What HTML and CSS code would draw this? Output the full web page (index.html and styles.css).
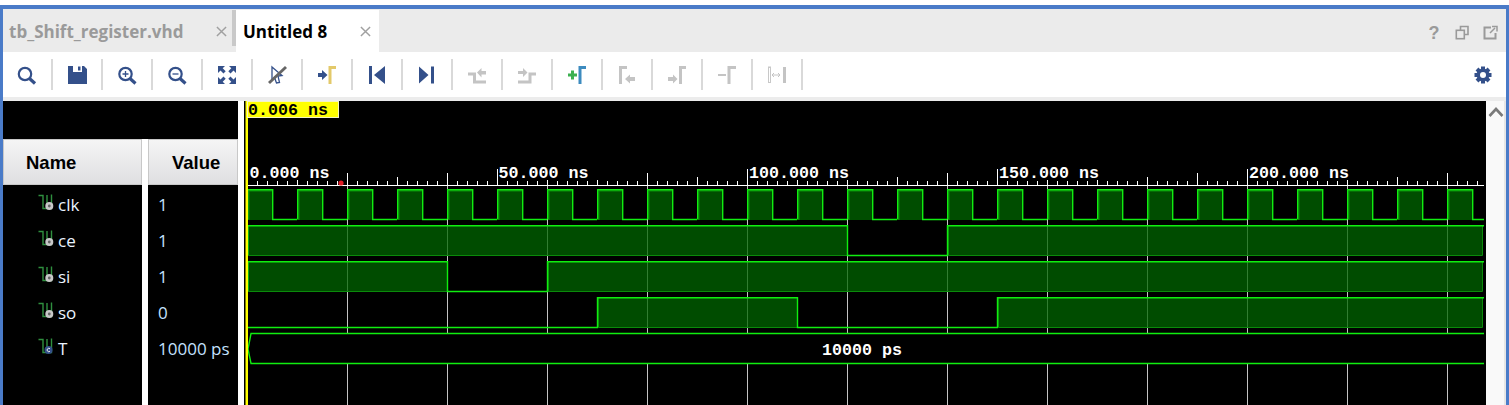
FILE: index.html
```html
<!DOCTYPE html>
<html lang="en">
<head>
    <meta charset="UTF-8">
    <meta name="viewport" content="width=device-width, initial-scale=1.0">
    <title>Untitled 8</title>
    <link rel="stylesheet" href="styles.css">
</head>
<body>
    <!-- shared icons -->
    <svg class="defs" width="0" height="0" aria-hidden="true">
        <symbol id="close" viewBox="0 0 12 12">
            <path d="M1 1l10 10M11 1L1 11" fill="none" stroke="#a0a0a0" stroke-width="1.6"/>
        </symbol>
        <symbol id="wire" viewBox="0 0 16 16">
            <path d="M0.5 1.5h4.5v13h8.5v-14M9 1v13" fill="none" stroke="#2f8f3f" stroke-width="1.4"/>
            <circle cx="11.3" cy="12" r="4" fill="#c8c8c8"/>
            <circle cx="11.3" cy="12" r="1.4" fill="#666"/>
        </symbol>
        <symbol id="wire-const" viewBox="0 0 16 16">
            <path d="M0.5 1.5h4.5v13h8.5v-14M9 1v13" fill="none" stroke="#2f8f3f" stroke-width="1.4"/>
            <circle cx="10.5" cy="12" r="4" fill="#34508a"/>
            <path d="M12 10.8a1.7 1.7 0 1 0 0 2.4" fill="none" stroke="#e8e8e8" stroke-width="1"/>
        </symbol>
    </svg>

    <div class="window">
        <div class="tabbar">
            <div class="tab">
                <span class="tab-title">tb_Shift_register.vhd</span>
                <svg class="tab-close"><use href="#close"/></svg>
            </div>
            <div class="tab-sep"></div>
            <div class="tab active">
                <span class="tab-title">Untitled 8</span>
                <svg class="tab-close"><use href="#close"/></svg>
            </div>
            <div class="tab-actions">
                <span class="help">?</span>
                <svg class="tab-icon" viewBox="0 0 16 16">
                    <path d="M6.5 5V1.5h7.5v8h-3.5" fill="none" stroke="#9a9a9a" stroke-width="1.6"/>
                    <rect x="2.3" y="5.3" width="8" height="8.4" fill="none" stroke="#9a9a9a" stroke-width="1.6"/>
                </svg>
                <svg class="tab-icon" viewBox="0 0 16 16">
                    <path d="M9 2.5H2.5v11h11V8" fill="none" stroke="#9a9a9a" stroke-width="2"/>
                    <path d="M8 8l5-5M10 1.5h5v5" fill="none" stroke="#9a9a9a" stroke-width="1.5"/>
                </svg>
            </div>
        </div>

        <div class="toolbar">
            <button class="tool" title="Search">
                <svg viewBox="0 0 24 24"><circle cx="10" cy="11" r="6.2" class="line"/><path d="M14.5 15.5l5.5 5" class="line thick"/></svg>
            </button>
            <button class="tool" title="Save">
                <svg viewBox="0 0 24 24"><path d="M3 3h5v6h9V3h2l3 3v15H3z" class="solid"/><path d="M13 3.5h2.5v4H13z" class="solid"/></svg>
            </button>
            <button class="tool" title="Zoom in">
                <svg viewBox="0 0 24 24"><circle cx="10.5" cy="11" r="6.2" class="line"/><path d="M15 15.5l5.5 5" class="line thick"/><path d="M7.5 11h6M10.5 8v6" class="line thin"/></svg>
            </button>
            <button class="tool" title="Zoom out">
                <svg viewBox="0 0 24 24"><circle cx="10.5" cy="11" r="6.2" class="line"/><path d="M15 15.5l5.5 5" class="line thick"/><path d="M7.5 11h6" class="line thin"/></svg>
            </button>
            <button class="tool" title="Zoom fit">
                <svg viewBox="0 0 24 24">
                    <path d="M3 3h7L7.7 5.3l3 3-2.2 2.2-3-3L3 10z" class="solid"/>
                    <path d="M21 3h-7l2.3 2.3-3 3 2.2 2.2 3-3L21 10z" class="solid"/>
                    <path d="M3 21h7l-2.3-2.3 3-3-2.2-2.2-3 3L3 14z" class="solid"/>
                    <path d="M21 21h-7l2.3-2.3-3-3 2.2-2.2 3 3L21 14z" class="solid"/>
                </svg>
            </button>
            <button class="tool" title="Snap to transition">
                <svg viewBox="0 0 24 24"><path d="M7 4l10 8.5-4 .5 1.5 6.5-3 .5-2-5.500-2.500 2.500z" class="line thin"/><path d="M4 20L21 4" fill="none" stroke="#666" stroke-width="3"/></svg>
            </button>
            <button class="tool" title="Go to cursor">
                <svg viewBox="0 0 24 24"><path d="M3 10h4V7l5.500 5-5.500 5v-3H3z" class="solid"/><path d="M15 21V4.500h6" fill="none" stroke="#e3c96a" stroke-width="3"/></svg>
            </button>
            <button class="tool" title="Go to time 0">
                <svg viewBox="0 0 24 24"><path d="M4 3h3v18H4zM20 3v18L9 12z" class="solid"/></svg>
            </button>
            <button class="tool" title="Go to last time">
                <svg viewBox="0 0 24 24"><path d="M4 3.500v17L13.500 12zM16 3.500h3v17h-3z" class="solid"/></svg>
            </button>
            <button class="tool" title="Previous transition">
                <svg viewBox="0 0 24 24"><path d="M3 11h6.500v8H21" class="muted-line"/><path d="M12 9.500L16.500 5v3H21v3.500h-4.500v3z" class="muted"/></svg>
            </button>
            <button class="tool" title="Next transition">
                <svg viewBox="0 0 24 24"><path d="M3 19h12v-8h6" class="muted-line"/><path d="M3 8h5V5l4.500 4.500L8 14v-3H3z" class="muted"/></svg>
            </button>
            <button class="tool" title="Add marker">
                <svg viewBox="0 0 24 24"><path d="M3 12h9M7.500 7.500v9" fill="none" stroke="#3cb050" stroke-width="3"/><path d="M15 21V4.500h6" fill="none" stroke="#3d8bbf" stroke-width="3"/></svg>
            </button>
            <button class="tool" title="Previous marker">
                <svg viewBox="0 0 24 24"><path d="M5.500 21V4.500H12" class="muted-line"/><path d="M10 16l5-4.500V14h5v4h-5v2.500z" class="muted"/></svg>
            </button>
            <button class="tool" title="Next marker">
                <svg viewBox="0 0 24 24"><path d="M3 14h5v-2.500l4.500 4.500L8 20.500V18H3z" class="muted"/><path d="M15.500 21V4.500H21" class="muted-line"/></svg>
            </button>
            <button class="tool" title="Remove marker">
                <svg viewBox="0 0 24 24"><path d="M3 12h8" class="muted-line thin"/><path d="M14 21V4.500h7" class="muted-line"/></svg>
            </button>
            <button class="tool" title="Swap cursors">
                <svg viewBox="0 0 24 24"><rect x="3.500" y="4" width="2" height="15.500" fill="none" stroke="#c8c8c8"/><path d="M7 12h8M9 10l-2 2 2 2M13 10l2 2-2 2" fill="none" stroke="#c4c4c4"/><path d="M18 4h3v16h-3z" class="muted"/></svg>
            </button>
            <button class="gear" title="Settings">
                <svg viewBox="0 0 24 24">
                    <path d="M12 3.500v17M3.500 12h17M6 6l12 12M18 6L6 18" fill="none" stroke="#34508a" stroke-width="4"/>
                    <circle cx="12" cy="12" r="6.500" fill="#34508a"/>
                    <circle cx="12" cy="12" r="3" fill="#fff"/>
                </svg>
            </button>
        </div>
        <div class="toolbar-edge"></div>

        <div class="wave-pane">
            <div class="signal-pane">
                <div class="pane-top"></div>
                <div class="signal-cols">
                    <div class="col col-name">
                        <div class="col-head">Name</div>
                        <div class="row"><svg class="wire"><use href="#wire"/></svg>clk</div>
                        <div class="row"><svg class="wire"><use href="#wire"/></svg>ce</div>
                        <div class="row"><svg class="wire"><use href="#wire"/></svg>si</div>
                        <div class="row"><svg class="wire"><use href="#wire"/></svg>so</div>
                        <div class="row"><svg class="wire"><use href="#wire-const"/></svg>T</div>
                    </div>
                    <div class="col col-value">
                        <div class="col-head">Value</div>
                        <div class="row">1</div>
                        <div class="row">1</div>
                        <div class="row">1</div>
                        <div class="row">0</div>
                        <div class="row">10000 ps</div>
                    </div>
                </div>
            </div>

            <svg class="waves" viewBox="244 101 1242 304">
                <defs>
                    <pattern id="minor" patternUnits="userSpaceOnUse" x="247" y="181" width="10" height="4">
                        <rect width="1" height="4" fill="#fff"/>
                    </pattern>
                    <pattern id="grid" patternUnits="userSpaceOnUse" x="347" y="186" width="100" height="10">
                        <rect width="1" height="10" fill="#c4c4c4"/>
                    </pattern>
                    <pattern id="clk" patternUnits="userSpaceOnUse" x="247" y="189" width="50" height="32">
                        <rect x="1" y="1" width="25" height="30" class="fill"/>
                        <path d="M2 31V2h23.500V31" class="dim"/>
                        <path d="M0.700 30.500V0.700h25v29.800h24.500" class="edge"/>
                    </pattern>
                </defs>

                <rect x="347" y="186" width="1101" height="219" fill="url(#grid)"/>

                <!-- ruler -->
                <rect x="247" y="185" width="1237" height="1" fill="#fff"/>
                <rect x="247" y="181" width="1231" height="4" fill="url(#minor)"/>
                <path class="major" d="M247.500 169V185M297.500 180V185M347.500 173V185M397.500 177V185M447.500 173V185M497.500 169V185M547.500 180V185M597.500 180V185M647.500 173V185M697.500 177V185M747.500 169V185M797.500 180V185M847.500 180V185M897.500 177V185M947.500 173V185M997.500 169V185M1047.500 180V185M1097.500 180V185M1147.500 177V185M1197.500 173V185M1247.500 169V185M1297.500 180V185M1347.500 180V185M1397.500 177V185M1447.500 173V185"/>
                <text class="time" x="249.500" y="178">0.000 ns</text>
                <text class="time" x="498.500" y="178">50.000 ns</text>
                <text class="time" x="749" y="178">100.000 ns</text>
                <text class="time" x="999" y="178">150.000 ns</text>
                <text class="time" x="1249" y="178">200.000 ns</text>
                <circle cx="341" cy="183" r="2.600" fill="#e01b24"/>

                <!-- clk -->
                <rect x="247" y="189" width="1237" height="32" fill="url(#clk)"/>

                <!-- ce -->
                <rect x="248" y="226" width="599" height="29" class="fill"/>
                <rect x="948" y="226" width="535" height="29" class="fill"/>
                <path class="dim" d="M248.500 226V255.500H847M948.500 226V255.500H1482.500V226"/>
                <path class="edge" d="M247.700 255.500V225.700H847.500V255.500H947.500V225.700H1484"/>

                <!-- si -->
                <rect x="248" y="262" width="199" height="29" class="fill"/>
                <rect x="548" y="262" width="935" height="29" class="fill"/>
                <path class="dim" d="M248.500 262V291.500H447M548.500 262V291.500H1482.500V262"/>
                <path class="edge" d="M247.700 291.500V261.700H447.500V291.500H547.500V261.700H1484"/>

                <!-- so -->
                <rect x="598" y="298" width="199" height="29" class="fill"/>
                <rect x="998" y="298" width="485" height="29" class="fill"/>
                <path class="dim" d="M598.500 298V327.500H797M998.500 298V327.500H1482.500V298"/>
                <path class="edge" d="M247 327.500H597.500V297.700H797.500V327.500H997.500V297.700H1484"/>

                <!-- T -->
                <rect x="248" y="334" width="1236" height="29" fill="#000"/>
                <path class="edge" d="M1484 333.500H251L248 349L251 363.500H1484"/>
                <text class="time" x="822" y="355">10000 ps</text>

                <!-- cursor -->
                <rect x="245.500" y="101" width="2.500" height="304" fill="#ffff00"/>
                <rect x="247.500" y="101.500" width="91" height="16" fill="#ffff00" stroke="#f4f4c0"/>
                <text class="time cursor-time" x="248" y="115">0.006 ns</text>
            </svg>

            <div class="scrollbar">
                <svg viewBox="0 0 16 12"><path d="M1.500 10L8 3l6.500 7" fill="none" stroke="#7a7a7a" stroke-width="2.600"/></svg>
            </div>
        </div>
    </div>
</body>
</html>
```

FILE: styles.css
```css
html, body {
    margin: 0;
    padding: 0;
    height: 405px;
    overflow: hidden;
    background-color: #fff;
}

.defs {
    position: absolute;
}

.window {
    margin-top: 5px;
    height: 400px;
    box-sizing: border-box;
    border: solid #4a7bc8;
    border-width: 4px 3px 0 3px;
    display: flex;
    flex-direction: column;
    font-family: "Open Sans", "Noto Sans", sans-serif;
}

/* Tabs */
.tabbar {
    height: 43px;
    flex: none;
    display: flex;
    align-items: flex-start;
    background-color: #ebebeb;
}

.tab {
    height: 42px;
    margin-top: 1px;
    width: 229px;
    box-sizing: border-box;
    padding: 0 5px 0 6px;
    display: flex;
    align-items: center;
    justify-content: space-between;
    color: #9a9a9a;
}

.tab-title {
    font-size: 17px;
    font-weight: 700;
}

.tab-close {
    width: 11px;
    height: 11px;
    margin-right: 0;
}

.tab-sep {
    width: 4px;
    height: 36px;
    margin-top: 1px;
    background-color: #c9c9c9;
}

.tab.active {
    width: 143px;
    padding: 0 8px 0 7px;
    background-color: #fff;
    color: #000;
}

.tab-actions {
    margin-left: auto;
    margin-right: 8px;
    margin-top: 15px;
    display: flex;
    align-items: center;
    gap: 12px;
}

.help {
    width: 16px;
    text-align: center;
    font-family: "Liberation Sans", sans-serif;
    font-size: 18px;
    font-weight: 700;
    line-height: 18px;
    color: #9a9a9a;
}

.tab-icon {
    width: 16px;
    height: 16px;
}

/* Toolbar */
.toolbar {
    height: 45px;
    flex: none;
    box-sizing: border-box;
    padding: 7px 11px 0 0;
    display: flex;
    align-items: flex-start;
    background-color: #fff;
}

.tool, .gear {
    background: none;
    border: none;
    padding: 0;
    margin: 0;
    cursor: pointer;
}

.tool {
    width: 50px;
    height: 31px;
    box-sizing: border-box;
    padding: 4px 0 0 12px;
    border-right: 2px solid #d9d9d9;
    display: flex;
    align-items: flex-start;
}

.tool svg, .gear svg {
    width: 24px;
    height: 24px;
    display: block;
}

.gear {
    margin-left: auto;
    padding-top: 4px;
}

.line {
    fill: none;
    stroke: #34508a;
    stroke-width: 2.200;
}

.line.thick {
    stroke-width: 3.200;
}

.line.thin {
    stroke-width: 1.300;
}

.solid {
    fill: #34508a;
}

.muted {
    fill: #c4c4c4;
}

.muted-line {
    fill: none;
    stroke: #c4c4c4;
    stroke-width: 3;
}

.muted-line.thin {
    stroke-width: 2;
}

.toolbar-edge {
    height: 4px;
    flex: none;
    background-color: #ececec;
}

/* Signals */
.wave-pane {
    flex: 1;
    min-height: 0;
    display: flex;
    background-color: #fff;
}

.signal-pane {
    width: 235px;
    flex: none;
    display: flex;
    flex-direction: column;
}

.pane-top {
    height: 38px;
    flex: none;
    background-color: #000;
}

.signal-cols {
    flex: 1;
    display: flex;
    gap: 6px;
}

.col {
    background-color: #000;
}

.col-name {
    width: 139px;
}

.col-value {
    width: 90px;
}

.col-head {
    height: 46px;
    box-sizing: border-box;
    border: 1px solid #c8c8c8;
    padding-top: 2px;
    background: linear-gradient(#f5f5f5, #dfdfe1);
    display: flex;
    align-items: center;
    font-family: "Liberation Sans", sans-serif;
    font-size: 18.500px;
    font-weight: 700;
    color: #000;
}

.col-name .col-head {
    padding-left: 22px;
}

.col-value .col-head {
    padding-left: 23px;
}

.row {
    height: 36px;
    box-sizing: border-box;
    padding-top: 2px;
    display: flex;
    align-items: center;
    font-size: 17px;
}

.col-name .row {
    padding-left: 35px;
    gap: 4px;
    color: #eaf4ff;
}

.col-value .row {
    padding-left: 10px;
    color: #c4e2ff;
}

.wire {
    width: 16px;
    height: 16px;
    flex: none;
    margin-top: -4px;
}

/* Waveform canvas */
.waves {
    width: 1242px;
    height: 304px;
    margin-left: 6px;
    flex: none;
    display: block;
    background-color: #000;
}

.fill {
    fill: #006600;
    fill-opacity: 0.750;
}

.edge {
    fill: none;
    stroke: #10ee10;
    stroke-width: 1.400;
}

.dim {
    fill: none;
    stroke: #0a8a0a;
    stroke-width: 1;
}

.major {
    fill: none;
    stroke: #fff;
    stroke-width: 1;
}

.time {
    font-family: "Liberation Mono", monospace;
    font-size: 16.670px;
    font-weight: 700;
    fill: #fff;
}

.cursor-time {
    fill: #000;
}

.scrollbar {
    width: 20px;
    flex: none;
    box-sizing: border-box;
    border-right: 2px solid #e6e6e6;
    background-color: #f9f9f9;
    padding: 5px 1px 0 2px;
}

.scrollbar svg {
    width: 16px;
    height: 12px;
    display: block;
}
```
